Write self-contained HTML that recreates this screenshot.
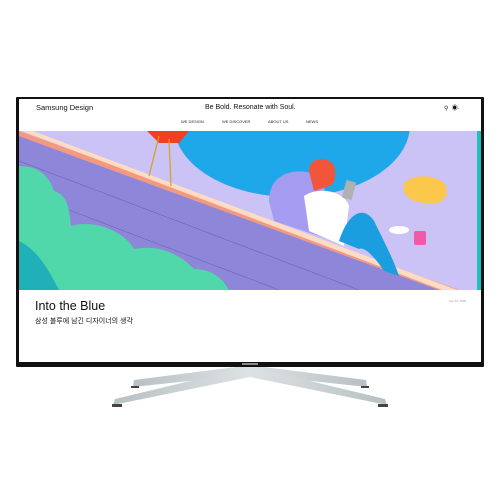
<!DOCTYPE html>
<html><head><meta charset="utf-8"><style>
html,body{margin:0;padding:0;background:#fff;width:500px;height:500px;overflow:hidden;position:relative;font-family:"Liberation Sans","Noto Sans CJK KR",sans-serif}
.bez{position:absolute;left:16px;top:97px;width:468px;height:270px;background:#111;border-radius:1px}
.scr{position:absolute;left:19px;top:99px;width:462px;height:263px;background:#fff;overflow:hidden}
.t{position:absolute;white-space:nowrap;color:#111}
.n{position:absolute;top:20px;font-size:4px;color:#222;white-space:nowrap}
</style></head><body>
<div class="bez"></div>
<div class="scr">
<div class="t" style="left:17px;top:4px;font-size:7.5px">Samsung Design</div>
<div class="t" style="left:186px;top:5px;font-size:7px">Be Bold. Resonate with Soul.</div>
<div class="t" style="left:425px;top:4px;font-size:6px">⚲ &nbsp;◉·</div>
<div class="n" style="left:162px">WE DESIGN</div>
<div class="n" style="left:203px">WE DISCOVER</div>
<div class="n" style="left:249px">ABOUT US</div>
<div class="n" style="left:287px">NEWS</div>
<svg style="position:absolute;left:0;top:32px" width="462" height="159" viewBox="0 0 462 159">
<rect width="462" height="159" fill="#cbc2f5"/>
<rect x="458" width="4" height="159" fill="#1fc0b8"/>
<ellipse cx="273" cy="-6" rx="118" ry="72" fill="#1ea8ea"/>
<polygon points="0,5 0,159 420,159" fill="#8e86d8"/>
<polygon points="0,0 0,5 420,159 440,159" fill="#f4997c"/>
<polygon points="3,0 423,159 438,159 14,0" fill="#fcdcc4"/>
<g stroke="#4a3e8a" stroke-width="0.5" fill="none" opacity=".6">
<line x1="0" y1="30" x2="340" y2="159"/><line x1="0" y1="60" x2="260" y2="159"/><line x1="0" y1="90" x2="180" y2="159"/>
</g>
<path d="M0,35 C20,35 30,45 35,60 C50,65 50,80 52,95 C75,88 105,100 115,118 C145,112 165,128 175,138 C195,138 205,150 210,159 L0,159 Z" fill="#50d8aa"/>
<path d="M0,110 C20,120 30,140 40,159 L0,159Z" fill="#20b0b8"/>
<polygon points="128,0 170,0 160,12 140,12" fill="#f04020"/>
<line x1="140" y1="5" x2="130" y2="45" stroke="#d8a020" stroke-width="1.2"/>
<line x1="150" y1="8" x2="152" y2="55" stroke="#d8a020" stroke-width="1.2"/>
<path d="M250,70 C250,40 280,35 300,45 C310,60 310,90 315,110 L255,90 Z" fill="#a49cf0"/>
<path d="M290,40 C290,25 310,25 315,35 C318,45 315,55 310,55 L295,60 Z" fill="#f2553a"/>
<path d="M285,65 C300,55 325,60 330,75 L325,115 L290,100 Z" fill="#fff"/>
<rect x="325" y="50" width="10" height="18" fill="#b0b0b0" transform="rotate(15 330 59)"/>
<path d="M320,110 C330,80 345,75 355,90 C365,110 375,130 380,145 L365,140 C355,125 345,115 340,118 Z" fill="#1a9ee0"/>
<path d="M385,60 C380,45 410,40 425,52 C432,62 425,75 410,72 C395,72 388,68 385,60 Z" fill="#fbc84c"/>
<ellipse cx="380" cy="99" rx="10" ry="4" fill="#fff"/>
<rect x="395" y="100" width="12" height="14" rx="2" fill="#f05aa8"/>
</svg>
<div class="t" style="left:16px;top:200px;font-size:12.5px">Into the Blue</div>
<div class="t" style="left:16px;top:217px;font-size:7px">삼성 블루에 남긴 디자이너의 생각</div>
<div class="t" style="left:430px;top:200px;font-size:3px;color:#999">Apr 24, 2020</div>
</div>
<div style="position:absolute;left:242px;top:363px;width:16px;height:2px;background:#888"></div>
<svg style="position:absolute;left:0;top:367px" width="500" height="45">
<defs><linearGradient id="g" x1="0" x2="1"><stop offset="0" stop-color="#b8c0c4"/><stop offset=".5" stop-color="#dde2e4"/><stop offset="1" stop-color="#b8c0c4"/></linearGradient></defs>
<polygon points="236,0 264,0 366,13 367,20 255,8 245,8 133,20 134,13" fill="url(#g)"/>
<polygon points="240,2 260,2 385,32 387,38 250,10 113,38 115,32" fill="url(#g)"/>
<rect x="131" y="19" width="8" height="2" fill="#444"/><rect x="361" y="19" width="8" height="2" fill="#444"/>
<rect x="112" y="37" width="10" height="3" fill="#444"/><rect x="378" y="37" width="10" height="3" fill="#444"/>
</svg>
</body></html>
